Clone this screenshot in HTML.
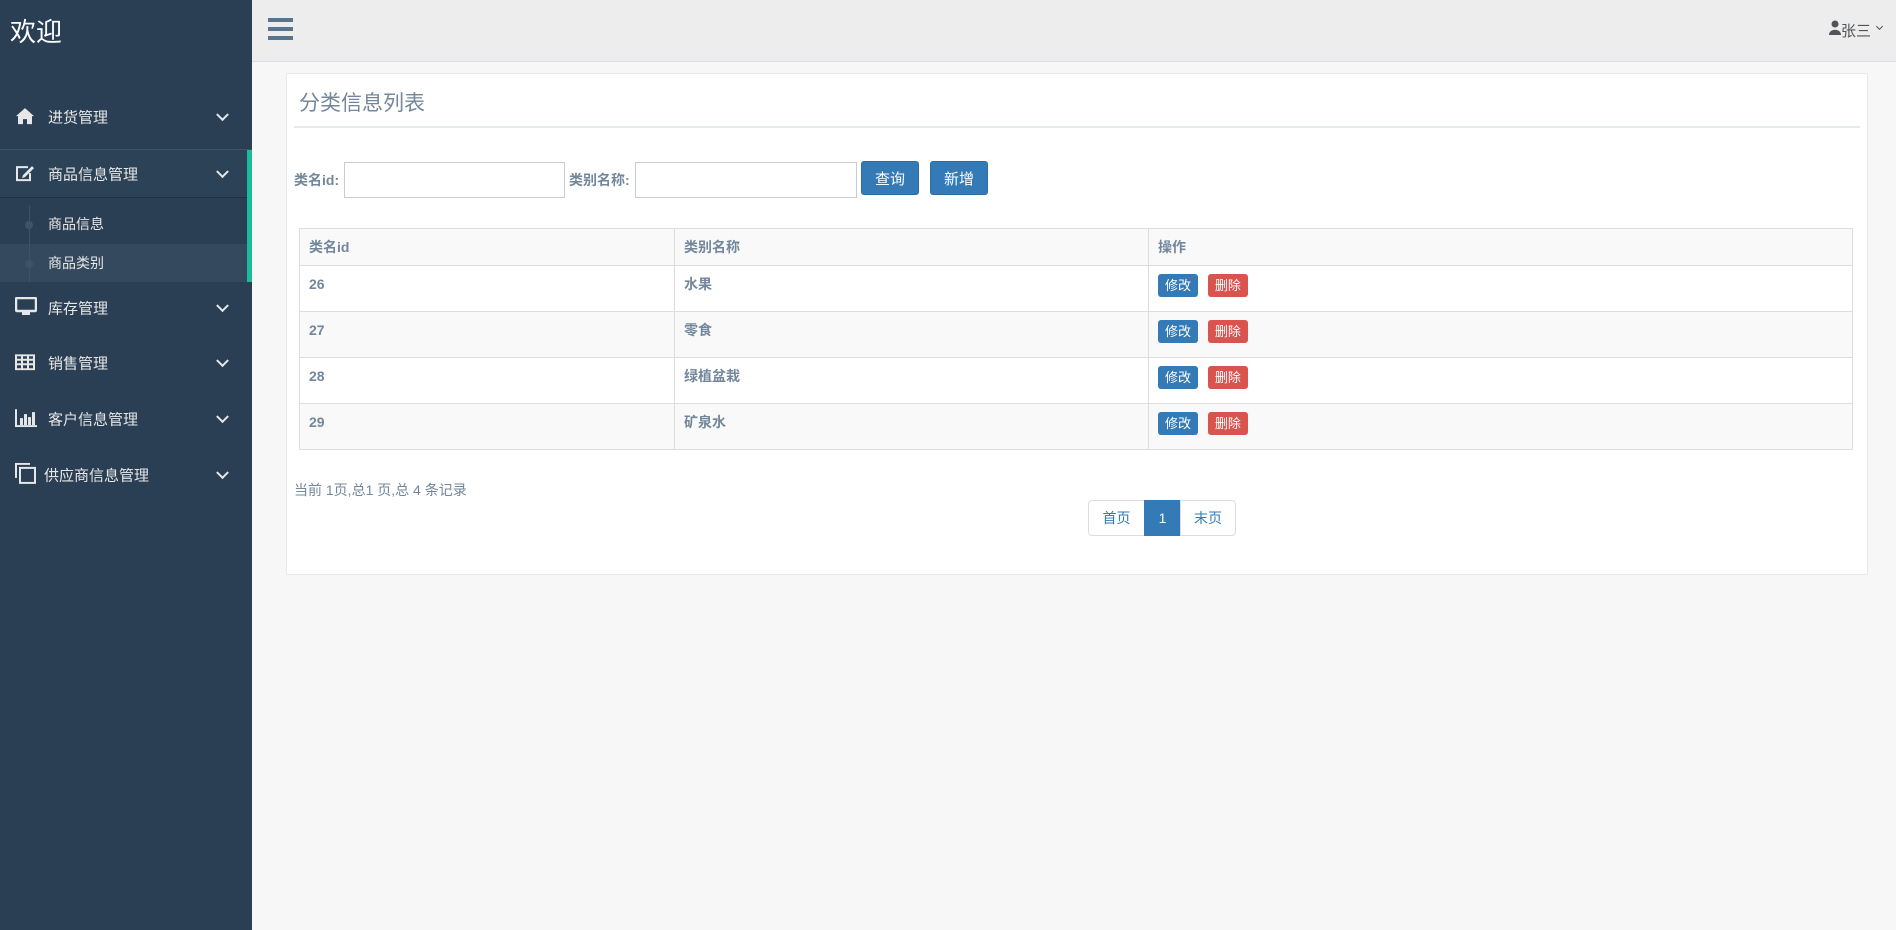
<!DOCTYPE html>
<html><head><meta charset="utf-8"><style>
*{box-sizing:border-box;margin:0;padding:0}
body{width:1896px;height:930px;overflow:hidden;background:#f7f7f7;font-family:"Liberation Sans","Noto Sans CJK SC",sans-serif;color:#73879c;position:relative}
.side{position:absolute;left:0;top:0;width:252px;height:930px;background:#2a3f54;color:#e7e7e7}
.brand{position:absolute;left:10px;top:12px;font-size:26px;color:#fff}
.mi{position:absolute;left:0;width:252px;height:48px;font-size:15px;color:#e7e7e7}
.mi .t{position:absolute;left:48px;top:50%;transform:translateY(-50%)}
.mi .ic{position:absolute;left:15px;top:50%;transform:translateY(-55%)}
.mi .ch{position:absolute;left:218px;top:50%;width:9px;height:9px;border-right:2.5px solid #e7e7e7;border-bottom:2.5px solid #e7e7e7;transform:translateY(-75%) rotate(45deg)}
.sub{position:absolute;left:48px;font-size:14px;color:#e7e7e7}
.top{position:absolute;left:252px;top:0;right:0;height:62px;background:#ededed;border-bottom:1px solid #d9dee4}
.card{position:absolute;left:286px;top:73px;width:1582px;height:502px;background:#fff;border:1px solid #e6e9ed}
.abs{position:absolute}
.inp{position:absolute;height:36px;border:1px solid #ccc;background:#fff}
.btn{position:absolute;background:#337ab7;border:1px solid #2e6da4;color:#fff;border-radius:3px;font-size:15px;display:flex;align-items:center;justify-content:center}
table{position:absolute;left:299px;top:228px;width:1554px;border-collapse:collapse;font-size:14px;font-weight:bold;line-height:16px}
td,th{border:1px solid #ddd;text-align:left;vertical-align:top;padding:10px 9px 0}
th{height:37px;padding-top:10px;background:#f9f9f9}
tr.o td{background:#f9f9f9}
td{height:46px}
.b{display:inline-block;width:40px;height:23px;border-radius:3px;color:#fff;font-size:13px;font-weight:normal;text-align:center;line-height:23px;margin-top:-2px}
.pg{position:absolute;top:500px;height:36px;border:1px solid #ddd;font-size:14px;color:#337ab7;display:flex;align-items:center;justify-content:center;background:#fff}
</style></head><body>
<div class="side">
 <div class="brand">欢迎</div>
 <div class="mi" style="top:93px"><svg class="ic" width="20" height="18" viewBox="0 0 20 18"><path d="M10 1 L1 9 L3 9 L3 17 L8 17 L8 12 L12 12 L12 17 L17 17 L17 9 L19 9 Z" fill="#e7e7e7"/></svg><span class="t">进货管理</span><i class="ch"></i></div>
 <div style="position:absolute;top:149px;left:0;width:252px;height:1px;background:#3d5366"></div>
 <div style="position:absolute;top:150px;left:0;width:247px;height:48px;background:#2c4257;border-bottom:1px solid #22313f"></div>
 <div class="mi" style="top:150px;width:240px"><svg class="ic" width="20" height="18" viewBox="0 0 20 18"><path d="M13 3 H2 V16 H15 V9" stroke="#e7e7e7" stroke-width="2" fill="none"/><path d="M8 11 L17 2 L19 4 L10 13 L7 14 Z" fill="#e7e7e7"/></svg><span class="t">商品信息管理</span><i class="ch"></i></div>
 <div style="position:absolute;top:244px;left:0;width:247px;height:38px;background:#34495d"></div>
 <div style="position:absolute;left:29px;top:205px;width:1px;height:77px;background:#3d5366"></div>
 <div style="position:absolute;left:25px;top:221px;width:8px;height:8px;border-radius:50%;background:#3d5366"></div>
 <div style="position:absolute;left:25px;top:260px;width:8px;height:8px;border-radius:50%;background:#3d5366"></div>
 <div class="sub" style="top:214px">商品信息</div>
 <div class="sub" style="top:253px">商品类别</div>
 <div style="position:absolute;left:247px;top:150px;width:5px;height:132px;background:#1abb9c"></div>
 <div class="mi" style="top:284px"><svg class="ic" width="22" height="20" viewBox="0 0 22 20"><rect x="1" y="1" width="20" height="13" rx="1" stroke="#e7e7e7" stroke-width="2.5" fill="none"/><rect x="7" y="15" width="8" height="3" fill="#e7e7e7"/></svg><span class="t">库存管理</span><i class="ch"></i></div>
 <div class="mi" style="top:339px"><svg class="ic" width="20" height="16" viewBox="0 0 20 16"><path d="M1 1H19V15H1Z M1 5.5H19 M1 10H19 M7 1V15 M13 1V15" stroke="#e7e7e7" stroke-width="2" fill="none"/></svg><span class="t">销售管理</span><i class="ch"></i></div>
 <div class="mi" style="top:395px"><svg class="ic" width="22" height="18" viewBox="0 0 22 18"><path d="M1 0V17H22" stroke="#e7e7e7" stroke-width="2" fill="none"/><rect x="5" y="9" width="3" height="7" fill="#e7e7e7"/><rect x="9" y="5" width="3" height="11" fill="#e7e7e7"/><rect x="13" y="8" width="3" height="8" fill="#e7e7e7"/><rect x="17" y="3" width="3" height="13" fill="#e7e7e7"/></svg><span class="t">客户信息管理</span><i class="ch"></i></div>
 <div class="mi" style="top:451px"><svg class="ic" width="22" height="22" viewBox="0 0 22 22"><path d="M15 1H1V15" stroke="#e7e7e7" stroke-width="2" fill="none"/><rect x="5" y="5" width="15" height="15" stroke="#e7e7e7" stroke-width="2" fill="none"/></svg><span class="t" style="left:44px">供应商信息管理</span><i class="ch"></i></div>
</div>
<div class="top">
 <div style="position:absolute;left:16px;top:18px;width:25px;height:4px;background:#5a738e;box-shadow:0 9px 0 #5a738e,0 18px 0 #5a738e"></div>
 <svg style="position:absolute;left:1577px;top:20px" width="12" height="15" viewBox="0 0 12 15"><circle cx="6" cy="4" r="3.5" fill="#515356"/><path d="M0 15 C0 8 12 8 12 15Z" fill="#515356"/></svg>
 <div style="position:absolute;left:1589px;top:20px;font-size:15px;color:#515356">张三</div>
 <div style="position:absolute;left:1625px;top:24px;width:5px;height:5px;border-right:1px solid #515356;border-bottom:1px solid #515356;transform:rotate(45deg)"></div>
</div>
<div class="card"></div>
<div class="abs" style="left:299px;top:87px;font-size:21px;color:#73879c">分类信息列表</div>
<div class="abs" style="left:294px;top:126px;width:1566px;height:2px;background:#e6e9ed"></div>
<div class="abs" style="left:294px;top:170px;font-size:14px;font-weight:bold">类名id:</div>
<div class="inp" style="left:344px;top:162px;width:221px"></div>
<div class="abs" style="left:569px;top:170px;font-size:14px;font-weight:bold">类别名称:</div>
<div class="inp" style="left:635px;top:162px;width:222px"></div>
<div class="btn" style="left:861px;top:161px;width:58px;height:34px">查询</div>
<div class="btn" style="left:930px;top:161px;width:58px;height:34px">新增</div>
<table>
<tr><th style="width:375px">类名id</th><th style="width:474px">类别名称</th><th>操作</th></tr>
<tr><td>26</td><td>水果</td><td><span class="b" style="background:#337ab7">修改</span> <span class="b" style="background:#d9534f;margin-left:6px">删除</span></td></tr>
<tr class="o"><td>27</td><td>零食</td><td><span class="b" style="background:#337ab7">修改</span> <span class="b" style="background:#d9534f;margin-left:6px">删除</span></td></tr>
<tr><td>28</td><td>绿植盆栽</td><td><span class="b" style="background:#337ab7">修改</span> <span class="b" style="background:#d9534f;margin-left:6px">删除</span></td></tr>
<tr class="o"><td>29</td><td>矿泉水</td><td><span class="b" style="background:#337ab7">修改</span> <span class="b" style="background:#d9534f;margin-left:6px">删除</span></td></tr>
</table>
<div class="abs" style="left:294px;top:480px;font-size:14px">当前 1页,总1 页,总 4 条记录</div>
<div class="pg" style="left:1088px;width:57px;border-radius:4px 0 0 4px">首页</div>
<div class="pg" style="left:1144px;width:37px;background:#337ab7;border-color:#337ab7;color:#fff">1</div>
<div class="pg" style="left:1180px;width:56px;border-radius:0 4px 4px 0">末页</div>
</body></html>
